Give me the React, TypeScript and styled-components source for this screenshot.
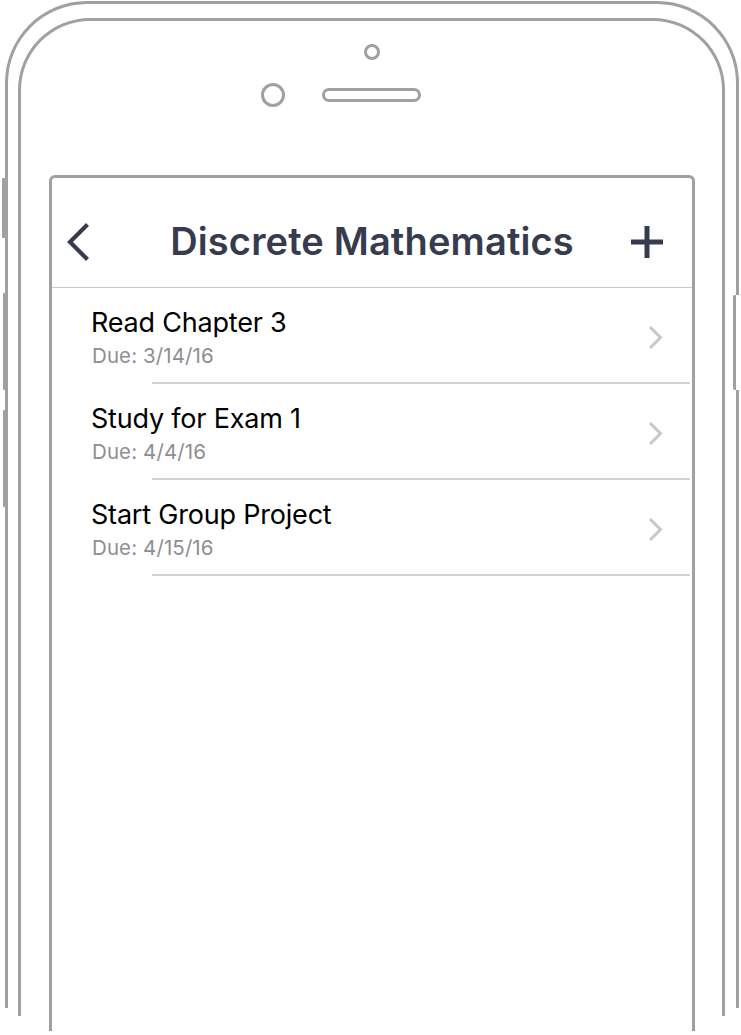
import React from "react";
import styled, { createGlobalStyle } from "styled-components";

const GlobalStyle = createGlobalStyle`
  html, body { margin: 0; padding: 0; background: #ffffff; }
  body { font-family: Inter, "Noto Sans", "Liberation Sans", sans-serif; }
  * { box-sizing: border-box; }
`;

const LINE = "#a0a0a0";
const INK = "#363c4e";

const Page = styled.div`
  width: 741px;
  height: 1035px;
  overflow: hidden;
  background: #fff;
`;

const Shell = styled.div`
  position: relative;
  margin: 1px 0 0 5px;
  width: 734px;
  height: 1007px;
  border: 3px solid ${LINE};
  border-bottom: none;
  border-radius: 82px 82px 0 0;
`;

const SideButton = styled.div<{ $top: number; $height: number; $left: number; $width: number }>`
  position: absolute;
  left: ${(p) => p.$left}px;
  top: ${(p) => p.$top}px;
  width: ${(p) => p.$width}px;
  height: ${(p) => p.$height}px;
  background: ${LINE};
  border-radius: 1px;
`;

const PowerButton = styled.div`
  position: absolute;
  right: -3px;
  top: 291px;
  width: 6px;
  height: 95px;
  background: #fff;
  border-left: 3px solid ${LINE};
  border-radius: 2px 0 0 2px;
`;

const Bezel = styled.div`
  margin: 14px 0 0 10px;
  width: 707px;
  height: 998px;
  border: 3px solid ${LINE};
  border-bottom: none;
  border-radius: 72px 72px 0 0;
`;

const SensorArea = styled.div`
  height: 154px;
  display: flex;
  flex-direction: column;
  align-items: center;
  padding-top: 23px;
`;

const ProximityDot = styled.div`
  width: 16px;
  height: 16px;
  border: 3px solid ${LINE};
  border-radius: 50%;
`;

const SensorRow = styled.div`
  margin-top: 23px;
  width: 100%;
  display: grid;
  grid-template-columns: 1fr auto 1fr;
  align-items: center;
`;

const Camera = styled.div`
  justify-self: end;
  margin-right: 37px;
  width: 24px;
  height: 24px;
  border: 3px solid ${LINE};
  border-radius: 50%;
`;

const Speaker = styled.div`
  width: 99px;
  height: 14px;
  border: 3px solid ${LINE};
  border-radius: 7px;
`;

const Screen = styled.div`
  margin-left: 28px;
  width: 646px;
  height: 856px;
  border: 3px solid ${LINE};
  border-bottom: none;
  border-radius: 6px 6px 0 0;
  overflow: hidden;
`;

const NavBar = styled.header`
  height: 110px;
  padding: 18px 14px 0 14px;
  display: grid;
  grid-template-columns: 1fr auto 1fr;
  align-items: center;
  border-bottom: 1px solid #c8c7cc;
`;

const NavButton = styled.button<{ $end?: boolean }>`
  justify-self: ${(p) => (p.$end ? "end" : "start")};
  margin-right: ${(p) => (p.$end ? "15px" : "0")};
  background: none;
  border: none;
  padding: 0;
  display: flex;
  align-items: center;
  color: ${INK};
  cursor: pointer;
`;

const Title = styled.h1`
  margin: 0;
  font-family: Inter, "Noto Sans", sans-serif;
  font-weight: 600;
  font-size: 38px;
  line-height: 1.2;
  color: ${INK};
  white-space: nowrap;
  letter-spacing: 0.15px;
`;

const List = styled.ul`
  list-style: none;
  margin: 0;
  padding: 0;
`;

const Row = styled.li`
  position: relative;
  height: 96px;
  padding: 2px 29px 0 39px;
  display: flex;
  align-items: center;
  justify-content: space-between;

  &::after {
    content: "";
    position: absolute;
    left: 100px;
    right: 2px;
    bottom: 0;
    height: 2px;
    background: #d0d0d5;
  }
`;

const RowText = styled.div`
  display: flex;
  flex-direction: column;
  gap: 5px;
`;

const RowTitle = styled.div`
  font-size: 27px;
  line-height: 32px;
  color: #000;
  letter-spacing: -0.2px;
`;

const RowSub = styled.div`
  font-size: 20.5px;
  line-height: 24px;
  color: #8e8e93;
  padding-left: 1px;
  letter-spacing: 0.1px;
`;

const BackIcon = () => (
  <svg width="24" height="38" viewBox="0 0 24 38" fill="none">
    <polyline points="20,3 4,19 20,35" stroke="currentColor" strokeWidth="4.2" strokeLinecap="square" strokeLinejoin="miter" />
  </svg>
);

const PlusIcon = () => (
  <svg width="32" height="32" viewBox="0 0 32 32">
    <rect x="13.5" y="0" width="5" height="32" fill="currentColor" />
    <rect x="0" y="13.5" width="32" height="5" fill="currentColor" />
  </svg>
);

const Chevron = () => (
  <svg width="15" height="25" viewBox="0 0 15 25" fill="none">
    <polyline points="2,2 12.5,12.5 2,23" stroke="#c7c7cc" strokeWidth="3" />
  </svg>
);

const tasks = [
  { title: "Read Chapter 3", due: "3/14/16" },
  { title: "Study for Exam 1", due: "4/4/16" },
  { title: "Start Group Project", due: "4/15/16" },
];

export default function App() {
  return (
    <Page>
      <GlobalStyle />
      <Shell>
        <SideButton $left={-6} $width={2.5} $top={174} $height={60} />
        <SideButton $left={-5} $width={3} $top={289} $height={97} />
        <SideButton $left={-5} $width={3} $top={406} $height={97} />
        <PowerButton />
        <Bezel>
          <SensorArea>
            <ProximityDot />
            <SensorRow>
              <Camera />
              <Speaker />
              <div />
            </SensorRow>
          </SensorArea>
          <Screen>
            <NavBar>
              <NavButton aria-label="Back">
                <BackIcon />
              </NavButton>
              <Title>Discrete Mathematics</Title>
              <NavButton $end aria-label="Add">
                <PlusIcon />
              </NavButton>
            </NavBar>
            <List>
              {tasks.map((t) => (
                <Row key={t.title}>
                  <RowText>
                    <RowTitle>{t.title}</RowTitle>
                    <RowSub>Due: {t.due}</RowSub>
                  </RowText>
                  <Chevron />
                </Row>
              ))}
            </List>
          </Screen>
        </Bezel>
      </Shell>
    </Page>
  );
}
